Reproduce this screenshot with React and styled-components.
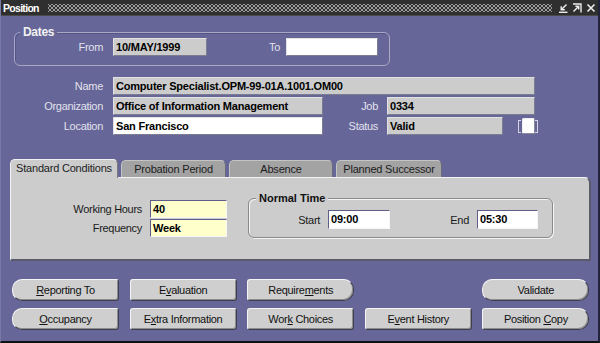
import React from "react";
import styled, { createGlobalStyle, css } from "styled-components";

const Global = createGlobalStyle`
  html, body { margin: 0; padding: 0; background: #666699; }
  body { font-family: "Liberation Sans", Arial, sans-serif; }
  * { box-sizing: border-box; }
`;

const Window = styled.div`
  width: 600px;
  height: 343px;
  background: #666699;
  display: flex;
  flex-direction: column;
  border-left: 1px solid #7a7aa8;
  border-right: 2px solid #22223a;
  border-bottom: 2px solid #111;
  overflow: hidden;
`;

const TitleBar = styled.div`
  height: 16px;
  flex-shrink: 0;
  display: flex;
  align-items: center;
  padding: 0 2px 0 2px;
  background: #2f2f2f;
  border-bottom: 1px solid #4a4a4a;
`;

const Title = styled.div`
  color: #fff;
  font-weight: bold;
  font-size: 10.5px;
  letter-spacing: -0.7px;
`;

const Dots = styled.div`
  flex: 1;
  height: 8px;
  margin: 0 6px 0 9px;
  background-image:
    radial-gradient(circle, #9a9a9a 0.8px, transparent 1.2px),
    radial-gradient(circle, #9a9a9a 0.8px, transparent 1.2px);
  background-size: 4px 4px, 4px 4px;
  background-position: 0 0, 2px 2px;
`;

const Icons = styled.div`
  display: flex;
  gap: 4px;
  align-items: center;
  svg { display: block; }
`;

const Content = styled.div`
  padding: 0 0 0 9px;
  display: flex;
  flex-direction: column;
`;

const Group = styled.div`
  position: relative;
  width: ${p => p.$w}px;
  height: ${p => p.$h}px;
  margin: ${p => p.$m};
  border-radius: 6px;
  ${p => p.$light
    ? css`
        border: 1px solid #8a8a8a;
        box-shadow: 1px 1px 0 #f4f4f4, inset 1px 1px 0 #f4f4f4;
      `
    : css`
        border: 1px solid #a8a8c4;
        box-shadow: inset 1px 1px 0 #55558a;
      `}
`;

const Legend = styled.span`
  position: absolute;
  top: -8px;
  left: ${p => p.$left}px;
  padding: 0 3px;
  font-weight: bold;
  font-size: ${p => (p.$light ? 11 : 12)}px;
  letter-spacing: ${p => (p.$light ? 0 : -0.3)}px;
  line-height: 14px;
  color: ${p => (p.$light ? "#111" : "#f2f2f2")};
  background: ${p => (p.$light ? "#cccccc" : "#666699")};
`;

const Row = styled.div`
  display: flex;
  align-items: center;
  padding-top: ${p => p.$pt || 0}px;
`;

const Label = styled.div`
  width: ${p => p.$w}px;
  margin-right: ${p => p.$gap}px;
  text-align: right;
  font-size: 11px;
  letter-spacing: -0.3px;
  white-space: nowrap;
  color: ${p => (p.$dark ? "#1a1a1a" : "#e2e2ec")};
`;

const Field = styled.div`
  width: ${p => p.$w}px;
  height: ${p => p.$h || 18}px;
  padding: 0 2px;
  font-size: 11px;
  font-weight: bold;
  letter-spacing: -0.2px;
  line-height: ${p => (p.$h || 18) - 2}px;
  color: #000;
  white-space: nowrap;
  overflow: hidden;
  background: ${p => p.$bg || "#cccccc"};
  border: 1px solid;
  ${p => p.$inset
    ? css`
        border-color: #5e5e88 #f6f6f6 #f6f6f6 #5e5e88;
      `
    : css`
        border-color: #e2e2e2 #7c7c90 #7c7c90 #e2e2e2;
      `}
`;

const Info = styled.div`
  display: flex;
  flex-direction: column;
  gap: 2px;
  margin-top: 11px;
`;

const Check = styled.div`
  display: flex;
  align-items: center;
  margin-left: 15px;
`;

const Bracket = styled.span`
  width: 3px;
  height: 13px;
  border: 1px solid #d4d4e4;
  ${p => (p.$right ? "border-left: none;" : "border-right: none;")}
`;

const Box = styled.span`
  width: 13px;
  height: 16px;
  margin-left: 1px;
  background: #fff;
  border: 1px solid;
  border-color: #f0f0f0 #8a8a9a #8a8a9a #f0f0f0;
  border-radius: 2px;
`;

const Tabs = styled.div`
  display: flex;
  align-items: flex-end;
  gap: 3px;
  margin-top: 23px;
  height: 19px;
`;

const Tab = styled.div`
  width: ${p => p.$w}px;
  height: ${p => (p.$active ? 19 : 17)}px;
  border-radius: 5px 5px 0 0;
  font-size: 11px;
  letter-spacing: -0.2px;
  color: #1c1c1c;
  text-align: center;
  line-height: 16px;
  position: relative;
  ${p => p.$active
    ? css`
        background: #cccccc;
        border-top: 1px solid #f2f2f2;
        border-left: 1px solid #f2f2f2;
        border-right: 1px solid #7a7a7a;
        margin-bottom: -1px;
        z-index: 1;
      `
    : css`
        background: #a3a3a3;
        border-top: 1px solid #c4c4c4;
        border-left: 1px solid #c4c4c4;
        border-right: 1px solid #6a6a7a;
      `}
`;

const Panel = styled.div`
  width: 581px;
  height: 84px;
  background: #cccccc;
  border-top: 1px solid #f2f2f2;
  border-left: 1px solid #f2f2f2;
  border-right: 2px solid #5a5a6a;
  border-bottom: 2px solid #5a5a6a;
  border-radius: 0 6px 0 0;
  display: flex;
  align-items: flex-start;
`;

const Column = styled.div`
  display: flex;
  flex-direction: column;
  gap: 1px;
  margin-top: 22px;
`;

const Buttons = styled.div`
  display: grid;
  grid-template-columns: repeat(5, 107px);
  grid-template-rows: 22px 22px;
  column-gap: 10.6px;
  row-gap: 7px;
  margin: 18px 0 0 2px;
`;

const radii = {
  left: "10px 3px 3px 10px",
  right: "3px 10px 10px 3px",
  both: "10px",
};

const Button = styled.button`
  grid-column: ${p => p.$col || "auto"};
  height: 22px;
  padding: 0;
  font-family: "Liberation Sans", Arial, sans-serif;
  font-size: 11px;
  letter-spacing: -0.3px;
  color: #111;
  background: #cfcfcf;
  border: 1px solid;
  border-color: #f4f4f4 #3e3e4e #3e3e4e #f4f4f4;
  box-shadow: inset -1px -1px 0 #8e8e8e;
  border-radius: ${p => radii[p.$round] || "3px"};
  u { text-decoration: underline; }
`;

const MinIcon = () => (
  <svg width="10" height="10" viewBox="0 0 10 10" fill="none" stroke="#eee" strokeWidth="1.4">
    <path d="M1 9.3H9.5" />
    <path d="M8.5 1.5L3.5 6.5" />
    <path d="M3.2 3.2V6.8H6.8" />
  </svg>
);

const MaxIcon = () => (
  <svg width="10" height="10" viewBox="0 0 10 10" fill="none" stroke="#eee" strokeWidth="1.4">
    <path d="M1 1H9V9.5" />
    <path d="M1.5 8.5L6.5 3.5" />
    <path d="M3.4 3.3H6.7V6.6" />
  </svg>
);

const CloseIcon = () => (
  <svg width="10" height="10" viewBox="0 0 10 10" fill="none" stroke="#eee" strokeWidth="1.6">
    <path d="M1.5 1.5L8.5 8.5M8.5 1.5L1.5 8.5" />
  </svg>
);

export default function App() {
  return (
    <>
      <Global />
      <Window>
        <TitleBar>
          <Title>Position</Title>
          <Dots />
          <Icons>
            <MinIcon />
            <MaxIcon />
            <CloseIcon />
          </Icons>
        </TitleBar>

        <Content>
          <Group $w={376} $h={34} $m="16px 0 0 4px">
            <Legend $left={5}>Dates</Legend>
            <Row $pt={5}>
              <Label $w={88} $gap={10}>From</Label>
              <Field $w={94}>10/MAY/1999</Field>
              <Label $w={73} $gap={6}>To</Label>
              <Field $w={92} $bg="#fff" />
            </Row>
          </Group>

          <Info>
            <Row>
              <Label $w={93} $gap={10}>Name</Label>
              <Field $w={422}>Computer Specialist.OPM-99-01A.1001.OM00</Field>
            </Row>
            <Row>
              <Label $w={93} $gap={10}>Organization</Label>
              <Field $w={210}>Office of Information Management</Field>
              <Label $w={55} $gap={9}>Job</Label>
              <Field $w={148}>0334</Field>
            </Row>
            <Row>
              <Label $w={93} $gap={10}>Location</Label>
              <Field $w={210} $bg="#fff">San Francisco</Field>
              <Label $w={55} $gap={9}>Status</Label>
              <Field $w={116}>Valid</Field>
              <Check>
                <Bracket />
                <Box />
                <Bracket $right />
              </Check>
            </Row>
          </Info>

          <Tabs>
            <Tab $w={108} $active>Standard Conditions</Tab>
            <Tab $w={105}>Probation Period</Tab>
            <Tab $w={104}>Absence</Tab>
            <Tab $w={106}>Planned Successor</Tab>
          </Tabs>
          <Panel>
            <Column>
              <Row>
                <Label $w={131} $gap={8} $dark>Working Hours</Label>
                <Field $w={77} $bg="#ffffcc" $inset>40</Field>
              </Row>
              <Row>
                <Label $w={131} $gap={8} $dark>Frequency</Label>
                <Field $w={77} $bg="#ffffcc" $inset>Week</Field>
              </Row>
            </Column>
            <Group $w={305} $h={40} $m="20px 0 0 21px" $light>
              <Legend $left={7} $light>Normal Time</Legend>
              <Row $pt={11}>
                <Label $w={71} $gap={8} $dark>Start</Label>
                <Field $w={62} $h={19} $bg="#fff" $inset>09:00</Field>
                <Label $w={79} $gap={8} $dark>End</Label>
                <Field $w={61} $h={19} $bg="#fff" $inset>05:30</Field>
              </Row>
            </Group>
          </Panel>

          <Buttons>
            <Button $round="left"><u>R</u>eporting To</Button>
            <Button>E<u>v</u>aluation</Button>
            <Button $round="right">Require<u>m</u>ents</Button>
            <Button $round="both" $col={5}>Validate</Button>
            <Button $round="left"><u>O</u>ccupancy</Button>
            <Button>E<u>x</u>tra Information</Button>
            <Button>Wor<u>k</u> Choices</Button>
            <Button>E<u>v</u>ent History</Button>
            <Button $round="right">Position <u>C</u>opy</Button>
          </Buttons>
        </Content>
      </Window>
    </>
  );
}
